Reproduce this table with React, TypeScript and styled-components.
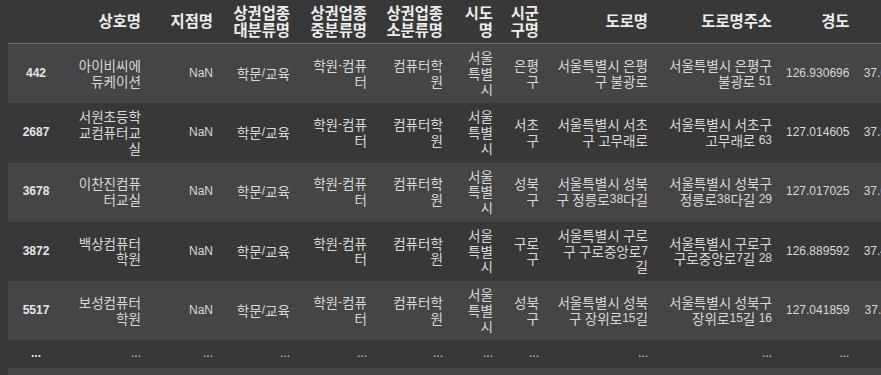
import React from "react";
import styled, { createGlobalStyle } from "styled-components";

const Global = createGlobalStyle`
  html, body {
    margin: 0;
    padding: 0;
    background: #383838;
    overflow: hidden;
  }
  body {
    font-family: "Liberation Sans", "Noto Sans CJK KR", sans-serif;
  }
`;

const Page = styled.div`
  padding-left: 8px;
  background: #383838;
  width: 1100px;
`;

const Table = styled.table`
  border-collapse: collapse;
  border-spacing: 0;
  table-layout: fixed;
  color: #d8d8d8;
  font-size: 12px;
`;

const Col = styled.col<{ $w: number }>`
  width: ${(p) => p.$w}px;
`;

const Ko = styled.span`
  font-family: "Noto Sans CJK KR", sans-serif;
  font-size: 1.13em;
  line-height: 0;
  vertical-align: -2px;
`;

const HeadCell = styled.th`
  font-size: 13.6px;
  font-weight: bold;
  color: #ededed;
  line-height: 16.5px;
  padding: 5px 7px;
  text-align: right;
  vertical-align: middle;
  white-space: pre-line;
  border-bottom: 1px solid #686868;
`;

const Row = styled.tr`
  &:nth-child(odd) {
    background: #454545;
  }
`;

const IndexCell = styled.th`
  font-weight: bold;
  color: #e6e6e6;
  line-height: 15.75px;
  padding: 6px 7px;
  text-align: center;
  vertical-align: middle;
`;

const Cell = styled.td`
  line-height: 15.75px;
  padding: 6px 7px;
  text-align: right;
  vertical-align: middle;
  white-space: pre-line;
  overflow: hidden;
`;

const Text = ({ value }: { value: string }) => {
  const parts = value.split(/([\u3131-\uD7A3]+)/);
  return (
    <>
      {parts.map((p, i) =>
        /[\u3131-\uD7A3]/.test(p) ? <Ko key={i}>{p}</Ko> : <React.Fragment key={i}>{p}</React.Fragment>
      )}
    </>
  );
};

const widths = [56, 84, 72, 77, 77, 76, 50, 46, 109, 124, 77, 71];

const headers = [
  "",
  "상호명",
  "지점명",
  "상권업종\n대분류명",
  "상권업종\n중분류명",
  "상권업종\n소분류명",
  "시도\n명",
  "시군\n구명",
  "도로명",
  "도로명주소",
  "경도",
  "위도",
];

const rows: string[][] = [
  [
    "442",
    "아이비씨에\n듀케이션",
    "NaN",
    "학문/교육",
    "학원-컴퓨\n터",
    "컴퓨터학\n원",
    "서울\n특별\n시",
    "은평\n구",
    "서울특별시 은평\n구 불광로",
    "서울특별시 은평구\n불광로 51",
    "126.930696",
    "37.619549",
  ],
  [
    "2687",
    "서원초등학\n교컴퓨터교\n실",
    "NaN",
    "학문/교육",
    "학원-컴퓨\n터",
    "컴퓨터학\n원",
    "서울\n특별\n시",
    "서초\n구",
    "서울특별시 서초\n구 고무래로",
    "서울특별시 서초구\n고무래로 63",
    "127.014605",
    "37.502786",
  ],
  [
    "3678",
    "이찬진컴퓨\n터교실",
    "NaN",
    "학문/교육",
    "학원-컴퓨\n터",
    "컴퓨터학\n원",
    "서울\n특별\n시",
    "성북\n구",
    "서울특별시 성북\n구 정릉로38다길",
    "서울특별시 성북구\n정릉로38다길 29",
    "127.017025",
    "37.605421",
  ],
  [
    "3872",
    "백상컴퓨터\n학원",
    "NaN",
    "학문/교육",
    "학원-컴퓨\n터",
    "컴퓨터학\n원",
    "서울\n특별\n시",
    "구로\n구",
    "서울특별시 구로\n구 구로중앙로7\n길",
    "서울특별시 구로구\n구로중앙로7길 28",
    "126.889592",
    "37.498312",
  ],
  [
    "5517",
    "보성컴퓨터\n학원",
    "NaN",
    "학문/교육",
    "학원-컴퓨\n터",
    "컴퓨터학\n원",
    "서울\n특별\n시",
    "성북\n구",
    "서울특별시 성북\n구 장위로15길",
    "서울특별시 성북구\n장위로15길 16",
    "127.041859",
    "37.611408",
  ],
  ["...", "...", "...", "...", "...", "...", "...", "...", "...", "...", "...", "..."],
  [
    "8912",
    "한빛컴퓨터\n학원",
    "NaN",
    "학문/교육",
    "학원-컴퓨\n터",
    "컴퓨터학\n원",
    "서울\n특별\n시",
    "강서\n구",
    "서울특별시 강서\n구 화곡로",
    "서울특별시 강서구\n화곡로 120",
    "126.849201",
    "37.541132",
  ],
];

export default function App() {
  return (
    <>
      <Global />
      <Page>
        <Table>
          <colgroup>
            {widths.map((w, i) => (
              <Col key={i} $w={w} />
            ))}
          </colgroup>
          <thead>
            <tr>
              {headers.map((h, i) => (
                <HeadCell key={i}>
                  <Text value={h} />
                </HeadCell>
              ))}
            </tr>
          </thead>
          <tbody>
            {rows.map((r, ri) => (
              <Row key={ri}>
                <IndexCell>{r[0]}</IndexCell>
                {r.slice(1).map((c, ci) => (
                  <Cell key={ci}>
                    <Text value={c} />
                  </Cell>
                ))}
              </Row>
            ))}
          </tbody>
        </Table>
      </Page>
    </>
  );
}
